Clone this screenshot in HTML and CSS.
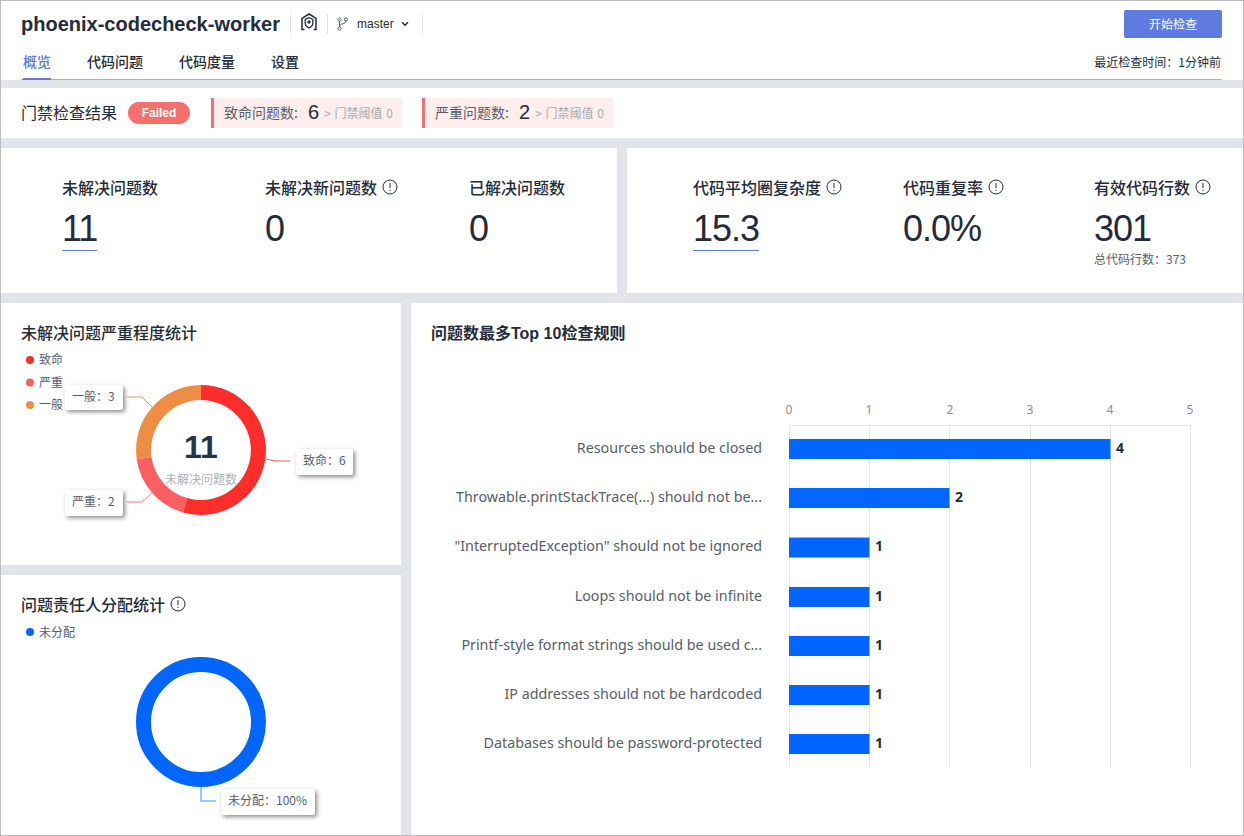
FILE: index.html
```html
<!DOCTYPE html>
<html lang="zh-CN">
<head>
<meta charset="utf-8">
<title>phoenix-codecheck-worker</title>
<link rel="stylesheet" href="styles.css">
</head>
<body>
<svg class="defs" width="0" height="0" aria-hidden="true">
  <symbol id="info" viewBox="0 0 16 16">
    <circle cx="8" cy="8" r="7" fill="none" stroke="#252b3a" stroke-width="1"/>
    <path d="M8 4v5.2M8 10.8v1.2" fill="none" stroke="#252b3a" stroke-width="1"/>
  </symbol>
</svg>
<div class="frame">
  <header class="header">
    <div class="head-top">
      <h1 class="title">phoenix-codecheck-worker</h1>
      <span class="divider"></span>
      <svg class="shield" width="18" height="18" viewBox="0 0 18 18">
        <path d="M4.500 16.500H2V5.400L9 1l7 4.400v11.100H13.500" fill="none" stroke="#252b3a" stroke-width="1.500"/>
        <path d="M5.200 6.400L9 4.600l3.800 1.800v4.200c0 2-1.600 3.400-3.800 4.400-2.200-1-3.800-2.400-3.800-4.400z" fill="none" stroke="#252b3a" stroke-width="1.300"/>
        <circle cx="9" cy="9" r="1.700" fill="#252b3a"/>
      </svg>
      <span class="divider"></span>
      <svg class="branch" width="12" height="14" viewBox="0 0 12 14">
        <circle cx="2.500" cy="2.500" r="1.600" fill="none" stroke="#575d6c"/>
        <circle cx="9" cy="2.500" r="1.600" fill="none" stroke="#575d6c"/>
        <circle cx="2.500" cy="11.500" r="1.600" fill="none" stroke="#575d6c"/>
        <path d="M2.500 4.100v5.800M9 4.100c0 3-6.500 2.500-6.500 5" fill="none" stroke="#575d6c"/>
      </svg>
      <span class="branch-name">master</span>
      <svg class="chevron" width="8" height="6" viewBox="0 0 8 6"><path d="M1 1.200l3 3 3-3" fill="none" stroke="#252b3a" stroke-width="1.500"/></svg>
      <span class="divider divider-end"></span>
      <button class="start-btn">开始检查</button>
    </div>
    <nav class="tabs">
      <a class="tab tab-active">概览</a>
      <a class="tab">代码问题</a>
      <a class="tab">代码度量</a>
      <a class="tab">设置</a>
      <span class="last-check">最近检查时间：1分钟前</span>
    </nav>
  </header>

  <section class="gate">
    <h2 class="gate-title">门禁检查结果</h2>
    <span class="pill">Failed</span>
    <div class="gate-box">
      <span class="gate-label">致命问题数:</span><span class="gate-num">6</span><span class="gate-limit">&gt; 门禁阈值 0</span>
    </div>
    <div class="gate-box">
      <span class="gate-label">严重问题数:</span><span class="gate-num">2</span><span class="gate-limit">&gt; 门禁阈值 0</span>
    </div>
  </section>

  <section class="stats">
    <div class="stat-card stat-left">
      <div class="stat">
        <div class="stat-label">未解决问题数</div>
        <div class="stat-value"><span class="linked">11</span></div>
      </div>
      <div class="stat">
        <div class="stat-label">未解决新问题数<svg class="info" width="16" height="16"><use href="#info"/></svg></div>
        <div class="stat-value">0</div>
      </div>
      <div class="stat">
        <div class="stat-label">已解决问题数</div>
        <div class="stat-value">0</div>
      </div>
    </div>
    <div class="stat-card stat-right">
      <div class="stat">
        <div class="stat-label">代码平均圈复杂度<svg class="info" width="16" height="16"><use href="#info"/></svg></div>
        <div class="stat-value"><span class="linked">15.3</span></div>
      </div>
      <div class="stat">
        <div class="stat-label">代码重复率<svg class="info" width="16" height="16"><use href="#info"/></svg></div>
        <div class="stat-value">0.0%</div>
      </div>
      <div class="stat">
        <div class="stat-label">有效代码行数<svg class="info" width="16" height="16"><use href="#info"/></svg></div>
        <div class="stat-value">301</div>
        <div class="stat-sub">总代码行数：373</div>
      </div>
    </div>
  </section>

  <section class="charts">
    <div class="chart-col">
      <div class="chart-card card-severity">
        <h3 class="chart-title">未解决问题严重程度统计</h3>
        <svg class="chart-svg" width="400" height="222" viewBox="1 343 400 222">
          <circle cx="30" cy="360" r="4" fill="#ff2e2a"/><text class="legend" x="39" y="364">致命</text>
          <circle cx="30" cy="382.500" r="4" fill="#fc5f5f"/><text class="legend" x="39" y="387">严重</text>
          <circle cx="30" cy="405" r="4" fill="#ee8e45"/><text class="legend" x="39" y="409">一般</text>

          <path d="M201 385A65 65 0 1 1 183.100 512.500L187.200 498.100A50 50 0 1 0 201 400Z" fill="#ff2e2a"/>
          <path d="M183.100 512.500A65 65 0 0 1 136.700 459.200L151.500 457.100A50 50 0 0 0 187.200 498.100Z" fill="#fc5f5f"/>
          <path d="M136.700 459.200A65 65 0 0 1 201 385V400A50 50 0 0 0 151.500 457.100Z" fill="#ee8e45"/>

          <path d="M266 459l9 2h15" fill="none" stroke="#ff5a56"/>
          <path d="M127 502h15l11-10" fill="none" stroke="#fc7f7f"/>
          <path d="M127 397h15l11 11" fill="none" stroke="#ee9a5c"/>

          <text class="donut-num" x="201" y="458">11</text>
          <text class="donut-sub" x="201" y="484">未解决问题数</text>

          <rect class="tip" x="65" y="385" width="58" height="25" rx="2"/>
          <text class="tip-text" x="72" y="401">一般：3</text>
          <rect class="tip" x="65" y="490" width="58" height="26" rx="2"/>
          <text class="tip-text" x="72" y="506">严重：2</text>
          <rect class="tip" x="296" y="449" width="57" height="26" rx="2"/>
          <text class="tip-text" x="303" y="465">致命：6</text>
        </svg>
      </div>
      <div class="chart-card card-owner">
        <h3 class="chart-title">问题责任人分配统计<svg class="info" width="16" height="16"><use href="#info"/></svg></h3>
        <svg class="chart-svg" width="400" height="220" viewBox="1 615 400 220">
          <circle cx="30" cy="632" r="4" fill="#0066ff"/><text class="legend" x="39" y="637">未分配</text>
          <circle cx="201" cy="722" r="57.500" fill="none" stroke="#0066ff" stroke-width="15"/>
          <path d="M201 787v14h15" fill="none" stroke="#80b3ff" stroke-width="1.500"/>
          <rect class="tip" x="221" y="789" width="94" height="26" rx="2"/>
          <text class="tip-text" x="228" y="805">未分配：100%</text>
        </svg>
      </div>
    </div>
    <div class="chart-card card-rules">
      <h3 class="chart-title">问题数最多Top 10检查规则</h3>
      <svg class="chart-svg" width="832" height="492" viewBox="411 343 832 492">
        <g class="axis-labels">
          <text x="789" y="414">0</text><text x="869" y="414">1</text><text x="950" y="414">2</text>
          <text x="1030" y="414">3</text><text x="1110" y="414">4</text><text x="1190" y="414">5</text>
        </g>
        <g class="grid-lines">
          <path d="M789 425.500H1191"/>
          <path d="M789.500 425V768M869.500 425V768M949.500 425V768M1030.500 425V768M1110.500 425V768M1190.500 425V768"/>
        </g>
        <g class="bars">
          <rect x="789" y="439" width="321.500" height="20"/>
          <rect x="789" y="488" width="160.500" height="20"/>
          <rect x="789" y="537.500" width="80.500" height="20"/>
          <rect x="789" y="587" width="80.500" height="20"/>
          <rect x="789" y="636" width="80.500" height="20"/>
          <rect x="789" y="685" width="80.500" height="20"/>
          <rect x="789" y="734" width="80.500" height="20"/>
        </g>
        <g class="rule-labels">
          <text x="762" y="453">Resources should be closed</text>
          <text x="762" y="502">Throwable.printStackTrace(...) should not be...</text>
          <text x="762" y="551">"InterruptedException" should not be ignored</text>
          <text x="762" y="601">Loops should not be infinite</text>
          <text x="762" y="650">Printf-style format strings should be used c...</text>
          <text x="762" y="699">IP addresses should not be hardcoded</text>
          <text x="762" y="748">Databases should be password-protected</text>
        </g>
        <g class="bar-values">
          <text x="1116" y="453">4</text>
          <text x="955" y="502">2</text>
          <text x="875" y="551">1</text>
          <text x="875" y="601">1</text>
          <text x="875" y="650">1</text>
          <text x="875" y="699">1</text>
          <text x="875" y="748">1</text>
        </g>
      </svg>
    </div>
  </section>
</div>
</body>
</html>
```
FILE: styles.css
```css
* { box-sizing: border-box; }
html, body { margin: 0; padding: 0; }
body {
  width: 1244px;
  height: 836px;
  overflow: hidden;
  font-family: "Liberation Sans", "Noto Sans CJK SC", sans-serif;
  color: #252b3a;
  background: #fff;
}
.defs { display: block; height: 0; }
.frame {
  width: 1244px;
  height: 836px;
  border: 1px solid #bdbdbd;
  background: #e1e4e8;
  overflow: hidden;
}

/* header */
.header { background: #fff; height: 79px; padding: 0 21px 0 20px; }
.head-top { display: flex; align-items: center; height: 44px; padding-top: 1px; }
.title { margin: 0; font-size: 20px; line-height: 28px; font-weight: 700; }
.divider { width: 1px; height: 20px; background: #dfe1e6; }
.title + .divider { margin-left: 10px; }
.shield { margin: -3px 9px 0 9px; }
.branch { margin-left: 9px; }
.branch-name { margin-left: 8px; font-size: 12px; color: #252b3a; }
.chevron { margin-left: 7px; }
.divider-end { margin-left: 13px; }
.start-btn {
  margin-left: auto;
  width: 98px;
  height: 28px;
  border: 0;
  border-radius: 2px;
  background: #5e7ce0;
  color: #fff;
  font: 12px "Noto Sans CJK SC", sans-serif;
  padding: 0;
}
.tabs {
  display: flex;
  gap: 36px;
  height: 35px;
  padding-left: 2px;
  border-bottom: 1px solid #adb0b8;
  align-items: stretch;
}
.tab {
  font: 500 14px/33px "Noto Sans CJK SC", sans-serif;
  color: #252b3a;
  height: 35px;
}
.tab-active { color: #5e7ce0; border-bottom: 2px solid #5e7ce0; }
.last-check {
  margin-left: auto;
  margin-right: 1px;
  font: 12px/34px "Noto Sans CJK SC", sans-serif;
  color: #252b3a;
}

/* gate */
.gate {
  margin-top: 8px;
  height: 50px;
  background: #fff;
  display: flex;
  align-items: center;
  padding: 0 20px;
}
.gate-title { margin: 0; padding-bottom: 2px; font: 400 16px/22px "Noto Sans CJK SC", sans-serif; }
.pill {
  margin-left: 11px;
  width: 62px;
  height: 22px;
  border-radius: 11px;
  background: #f66f6a;
  color: #fff;
  font: 700 12px/22px "Liberation Sans", sans-serif;
  text-align: center;
}
.gate-box {
  width: 191px;
  height: 30px;
  background: #ffeeed;
  border-left: 3px solid #f66f6a;
  padding: 0 0 2px 10px;
  display: flex;
  align-items: center;
}
.pill + .gate-box { margin-left: 21px; }
.gate-box + .gate-box { margin-left: 20px; }
.gate-label { font: 14px "Noto Sans CJK SC", sans-serif; color: #575d6c; width: 74px; white-space: nowrap; }
.gate-num { margin-left: 10px; font: 20px "Liberation Sans", sans-serif; color: #252b3a; }
.gate-limit { margin-left: 5px; font: 12px "Noto Sans CJK SC", sans-serif; color: #a6a9b1; white-space: nowrap; word-spacing: 1px; }

/* stats */
.stats { margin-top: 10px; height: 145px; display: grid; grid-template-columns: 616px 616px; gap: 10px; }
.stat-card { background: #fff; display: grid; padding-top: 27px; }
.stat-left { grid-template-columns: 203px 204px 140px; padding-left: 61px; }
.stat-right { grid-template-columns: 210px 191px 150px; padding-left: 66px; }
.stat-label {
  font: 500 16px/24px "Noto Sans CJK SC", sans-serif;
  white-space: nowrap;
  display: flex;
  align-items: center;
}
.info { margin-left: 5px; flex: none; }
.stat-value { margin-top: 9px; font: 36px/42px "Liberation Sans", sans-serif; letter-spacing: -1px; height: 42px; }
.linked { display: inline-block; height: 43px; border-bottom: 1px solid #5e7ce0; }
.stat-sub { margin-top: 0; font: 12px/18px "Noto Sans CJK SC", sans-serif; color: #575d6c; }

/* charts */
.charts { margin-top: 10px; height: 532px; display: grid; grid-template-columns: 400px 832px; gap: 10px; }
.chart-col { display: flex; flex-direction: column; gap: 10px; }
.chart-card { background: #fff; }
.card-severity { height: 262px; }
.card-owner { height: 260px; }
.card-rules { height: 532px; }
.chart-title {
  margin: 0;
  padding: 18px 0 0 20px;
  height: 40px;
  font: 500 16px/20px "Noto Sans CJK SC", sans-serif;
  display: flex;
  align-items: center;
  color: #252b3a;
}
.card-rules .chart-title { padding-top: 21px; font-family: "Liberation Sans", "Noto Sans CJK SC", sans-serif; font-weight: 700; font-size: 16px; }
.chart-svg { display: block; }
.legend { font: 12px "Noto Sans CJK SC", sans-serif; fill: #575d6c; }
.donut-num { font: 700 32px "Liberation Sans", sans-serif; fill: #2a3245; text-anchor: middle; }
.donut-sub { font: 12px "Noto Sans CJK SC", sans-serif; fill: #adb0b8; text-anchor: middle; }
.tip { fill: #fff; filter: drop-shadow(2px 2px 2px rgba(0, 0, 0, .45)); }
.tip-text { font: 12px "Noto Sans CJK SC", sans-serif; fill: #575d6c; }
.axis-labels text { font: 12px "Noto Sans", sans-serif; fill: #8a8e99; text-anchor: middle; }
.grid-lines path { fill: none; stroke: #e4e5e8; stroke-width: 1; }
.bars rect { fill: #0066ff; }
.rule-labels text { font: 14.3px "Noto Sans", sans-serif; fill: #575d6c; text-anchor: end; }
.bar-values text { font: 700 14px "Noto Sans", sans-serif; fill: #252b3a; }
```
